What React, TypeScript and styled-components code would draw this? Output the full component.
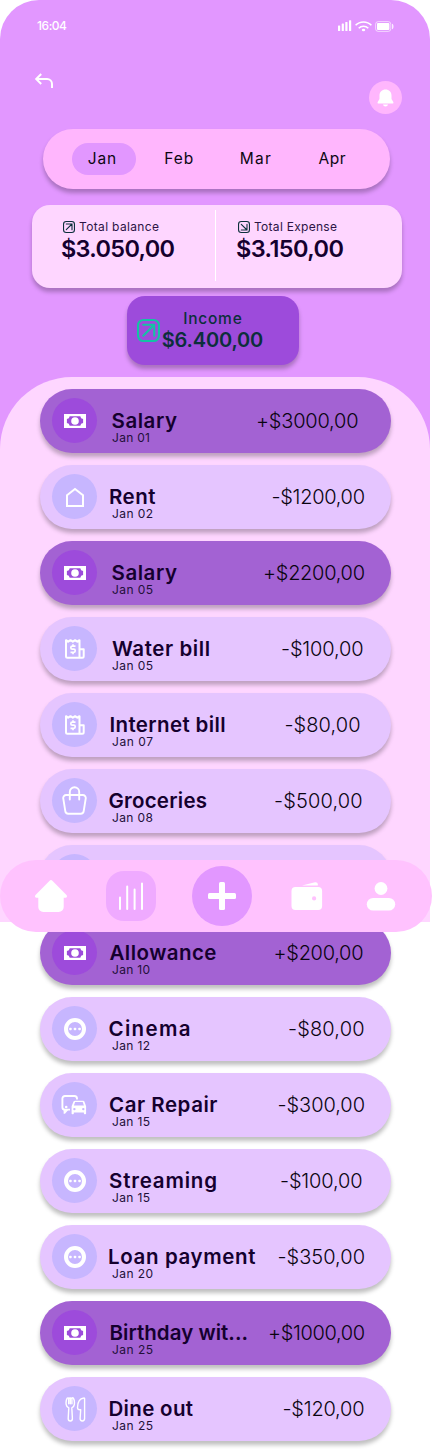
import { useLayoutEffect, useRef, useState } from "react";
import type { ReactNode } from "react";
import styled, { createGlobalStyle } from "styled-components";

const GlobalStyle = createGlobalStyle`
  *, *::before, *::after { box-sizing: border-box; }
  body {
    margin: 0;
    background: #fff;
    font-family: Inter, "Liberation Sans", sans-serif;
    overflow-x: hidden;
  }
  svg { display: block; flex: none; }
`;

const ink = "#15002e";
const softShadow = "0 4px 4px rgba(0, 0, 0, 0.25)";

const Page = styled.div`
  position: relative;
  width: 432px;
  height: 1449px;
  overflow: hidden;
`;

const Screen = styled.main`
  width: 430px;
  height: 922px;
  background: #e297ff;
  border-radius: 39px 39px 0 0;
`;

const StatusBar = styled.div`
  display: flex;
  justify-content: space-between;
  height: 69px;
  padding: 19px 36px 0 37px;
  color: #fff;
`;

const Clock = styled.span`
  font-size: 12px;
  line-height: 14px;
  font-weight: 500;
`;

const StatusIcons = styled.div`
  display: flex;
  align-items: flex-start;
`;

const TopActions = styled.header`
  display: flex;
  justify-content: space-between;
  height: 60px;
  padding: 4px 28px 0 34px;
`;

const BellButton = styled.button`
  display: grid;
  place-items: center;
  width: 33px;
  height: 33px;
  margin-top: 8px;
  padding: 0;
  border: 0;
  border-radius: 50%;
  background: #ffb6fd;
`;

const Months = styled.nav`
  display: flex;
  align-items: center;
  gap: 12.7px;
  width: 347px;
  height: 60px;
  margin-left: 43px;
  padding-left: 29px;
  border-radius: 30px;
  background: #ffb6fd;
  box-shadow: ${softShadow};
`;

const Month = styled.button<{ $active?: boolean }>`
  display: flex;
  justify-content: center;
  width: 64px;
  height: 32px;
  padding: 6px 4px 0 0;
  border: 0;
  border-radius: 16px;
  background: ${(p) => (p.$active ? "#e297ff" : "transparent")};
  color: #0c0712;
  font: 400 15.5px/20px Inter, sans-serif;
`;

const Totals = styled.section`
  display: flex;
  width: 370px;
  height: 83px;
  margin: 16px 0 0 32px;
  padding-top: 5px;
  border-radius: 18px;
  background: #fed6ff;
  box-shadow: ${softShadow};
`;

const Total = styled.div<{ $inset: number; $width: number }>`
  width: ${(p) => p.$width}px;
  padding: 10px 0 0 ${(p) => p.$inset}px;
  color: ${ink};
`;

const TotalLabel = styled.div`
  display: flex;
  align-items: center;
  gap: 4px;
  margin-left: 2px;
  height: 14px;
  font-size: 12px;
  line-height: 14px;
  color: #2c1445;
`;

const TotalValue = styled.div`
  font-size: 23.5px;
  line-height: 30px;
  font-weight: 600;
`;

const Divider = styled.div`
  width: 1px;
  height: 71px;
  background: #fff;
`;

const Income = styled.section`
  display: flex;
  width: 172px;
  height: 69px;
  margin: 8px 0 0 127px;
  padding: 14px 0 0 10px;
  border-radius: 18px;
  background: #9d4bdb;
  box-shadow: ${softShadow};
  color: #0c2f3b;

  > svg { margin-top: 9px; }
`;

const IncomeText = styled.div`
  display: flex;
  flex-direction: column;
  align-items: center;
  width: 104px;
  margin-left: 0.5px;
`;

const IncomeLabel = styled.div`
  font-size: 15.5px;
  line-height: 18px;
  font-weight: 500;
`;

const IncomeValue = styled.div`
  font-size: 20px;
  line-height: 24px;
  font-weight: 600;
`;

const Sheet = styled.section`
  height: 545px;
  margin-top: 12px;
  padding: 12px 0 0 40px;
  border-radius: 72px 72px 0 0;
  background: #fed6ff;
`;

const List = styled.ul`
  display: flex;
  flex-direction: column;
  gap: 12px;
  margin: 0;
  padding: 0;
  list-style: none;
`;

const Row = styled.li<{ $income?: boolean }>`
  display: flex;
  align-items: flex-start;
  width: 351px;
  height: 64px;
  padding-left: 12px;
  border-radius: 32px;
  background: ${(p) => (p.$income ? "#a362d3" : "#e5c5ff")};
  box-shadow: ${softShadow};
`;

const Badge = styled.div<{ $income?: boolean }>`
  display: grid;
  place-items: center;
  flex: none;
  width: 45px;
  height: 45px;
  margin-top: 9px;
  padding: 1px 0 0 1px;
  border-radius: 50%;
  background: ${(p) => (p.$income ? "#9d4bdb" : "#c7b6ff")};
`;

const Details = styled.div`
  padding: 21px 0 0 11px;
`;

const Title = styled.div<{ $indent: number }>`
  height: 22px;
  padding-left: ${(p) => p.$indent}px;
  font-size: 20.5px;
  line-height: 22px;
  font-weight: 600;
  color: ${ink};
`;

const When = styled.div`
  height: 12px;
  margin-left: 4px;
  font-size: 12px;
  line-height: 12px;
  color: #23103a;
`;

const Amount = styled.div<{ $end: number }>`
  margin-left: auto;
  padding: 20px ${(p) => p.$end}px 0 0;
  font-size: 20px;
  line-height: 24px;
  font-weight: 300;
  color: #0a0410;
`;

const TabBar = styled.nav`
  position: absolute;
  top: 860px;
  left: 0;
  display: flex;
  align-items: center;
  width: 432px;
  height: 72px;
  padding-left: 34px;
  border-radius: 36px;
  background: #ffc2fe;
`;

const Tab = styled.button<{ $size: number; $gap: number; $fill?: string; $round?: number }>`
  display: grid;
  place-items: center;
  flex: none;
  width: ${(p) => p.$size}px;
  height: ${(p) => p.$size}px;
  margin-left: ${(p) => p.$gap}px;
  padding: 0;
  border: 0;
  border-radius: ${(p) => p.$round ?? 0}px;
  background: ${(p) => p.$fill ?? "transparent"};
`;

const Tracked = styled.span`
  display: block;
  width: max-content;
  white-space: nowrap;
`;

/* Spreads or tightens the tracking so that a label takes up a set width. */
function Fit({ width, children }: { width: number; children: string }) {
  const ref = useRef<HTMLSpanElement>(null);
  const [tracking, setTracking] = useState(0);
  useLayoutEffect(() => {
    const el = ref.current;
    if (!el) return;
    el.style.letterSpacing = "0px";
    const natural = el.getBoundingClientRect().width;
    const value = (width - natural) / (children.length - 1);
    el.style.letterSpacing = `${value}px`;
    setTracking(value);
  }, [width, children]);
  return (
    <Tracked ref={ref} style={{ letterSpacing: tracking, marginRight: -tracking }}>
      {children}
    </Tracked>
  );
}

const CashIcon = () => (
  <svg width="22" height="14" viewBox="0 0 22 14">
    <path fill="#fff" fillRule="evenodd" d="M0 0h22v14H0zM5.700 2.200A3.200 3.200 0 0 1 2.900 5v4a3.200 3.200 0 0 1 2.800 2.800h10.600A3.200 3.200 0 0 1 19.100 9V5a3.200 3.200 0 0 1-2.800-2.800z" />
    <circle cx="11" cy="7" r="3.800" fill="#fff" />
  </svg>
);

const HouseIcon = () => (
  <svg width="20" height="20" viewBox="0 0 20 20" fill="none" stroke="#fff" strokeWidth="2">
    <path d="M2 8.200 10 2l8 6.200V19H2z" />
  </svg>
);

const ReceiptIcon = () => (
  <svg width="22" height="22" viewBox="0 0 22 22" fill="none" stroke="#fff" strokeWidth="2" strokeLinejoin="round">
    <path d="M15.500 19.800H3.500A1.500 1.500 0 0 1 2 18.300V2.200l2.200 1.500 2.300-1.500 2.300 1.500 2.300-1.500 2.200 1.500 2.200-1.500v17.600h2.700a1.500 1.500 0 0 0 1.500-1.500v-7.100h-4" />
    <path strokeWidth="1.700" d="M11.500 8.200H8.300a1.500 1.500 0 0 0 0 3h1.400a1.500 1.500 0 0 1 0 3.100H6.500M9 6.300v1.900m0 6.100v2" />
  </svg>
);

const BagIcon = () => (
  <svg width="26" height="30" viewBox="0 0 26 30" fill="none" stroke="#fff" strokeWidth="1.900" strokeLinecap="round">
    <path d="M4.300 9h16.400a3 3 0 0 1 3 3.600l-2 12.500a3 3 0 0 1-3 2.600H6.300a3 3 0 0 1-3-2.600l-2-12.500a3 3 0 0 1 3-3.600z" />
    <path d="M7.800 13.500V6a4.700 4.700 0 0 1 9.400 0v7.500" />
  </svg>
);

const DotsIcon = () => (
  <svg width="22" height="22" viewBox="0 0 22 22">
    <circle cx="11" cy="11" r="9" fill="none" stroke="#fff" strokeWidth="4" />
    <g fill="#fff">
      <rect x="5.200" y="9.800" width="2.500" height="2.500" rx=".8" />
      <rect x="9.750" y="9.800" width="2.500" height="2.500" rx=".8" />
      <rect x="14.300" y="9.800" width="2.500" height="2.500" rx=".8" />
    </g>
  </svg>
);

const CommuteIcon = () => (
  <svg width="26" height="20" viewBox="0.6 0 26 20" overflow="visible">
    <path fill="none" stroke="#fff" strokeWidth="1.900" d="M8.600 14.600H3.400A2.400 2.400 0 0 1 1 12.200V3.600A2.600 2.600 0 0 1 3.600 1H13a2.600 2.600 0 0 1 2.600 2.600v.8" />
    <circle cx="4.800" cy="12" r="1.300" fill="#fff" />
    <path fill="#fff" d="M2.200 15h4.600l-3.200 3.800H2.200z" />
    <path fill="#fff" fillRule="evenodd" d="M13.600 5.800h8.200c.6 0 1 .3 1.200.8l1.700 4.600V18.500c0 .4-.3.700-.7.700h-.8c-.4 0-.7-.3-.7-.7v-1H12.400v1c0 .4-.3.700-.7.700h-.8c-.4 0-.7-.3-.7-.7v-7.300l1.900-4.600c.3-.5.800-.8 1.500-.8zM13.700 7.100l-1.200 3.300h10l-1.200-3.300zM13 12.900a1.200 1.200 0 1 0 0 2.400 1.200 1.200 0 0 0 0-2.400zm8.900 0a1.200 1.200 0 1 0 0 2.400 1.200 1.200 0 0 0 0-2.400z" />
  </svg>
);

const CutleryIcon = () => (
  <svg width="21" height="25" viewBox="0 0 21 25" fill="none" stroke="#fff" strokeWidth="1.400" strokeLinejoin="round" strokeLinecap="round">
    <path d="M2.200 1.200C1.100 3 .9 5.700 1.200 7.600c.2 1.700 1.400 2.700 2.600 3.200L3.200 21.500c0 1.500.9 2.500 2.100 2.500s2.100-1 2.100-2.500L6.800 10.800c1.200-.5 2.300-1.500 2.500-3.200.3-1.900.1-4.600-.9-6.400-.6-.7-1.500-.4-1.500.5v5M2.200 1.200c.6-.6 1.500-.3 1.500.5v5M3.700 1.700c.3-1 2.800-1 3.200 0M5.300 1.500v5.200" />
    <path d="M18.800 1c-3.800.5-6.200 4.300-6.300 9.500 0 1.500.8 2.300 2.300 2.300h.9l-.6 8.800c0 1.400.9 2.400 2.200 2.400s2.300-1 2.300-2.400V1.600c0-.4-.4-.7-.8-.6z" />
  </svg>
);

const ArrowBox = ({ size, color, down }: { size: number; color: string; down?: boolean }) => (
  <svg width={size} height={size} viewBox="0 0 22 22" fill="none" stroke={color} strokeWidth="2" strokeLinecap="round" strokeLinejoin="round">
    <rect x="1" y="1" width="20" height="20" rx="5" />
    {down ? <path d="m6 6 10.500 10.500M16.500 6v10.500H6" /> : <path d="M6 16 16.500 5.500M6 5.500h10.500V16" />}
  </svg>
);

type Kind = "cash" | "house" | "receipt" | "bag" | "dots" | "car" | "food";

const icons: Record<Kind, ReactNode> = {
  cash: <CashIcon />,
  house: <HouseIcon />,
  receipt: <ReceiptIcon />,
  bag: <BagIcon />,
  dots: <DotsIcon />,
  car: <CommuteIcon />,
  food: <CutleryIcon />,
};

interface Entry {
  kind: Kind;
  title: string;
  titleWidth: number;
  indent: number;
  date: string;
  dateWidth: number;
  amount: string;
  amountWidth: number;
  end: number;
}

const entry = (
  kind: Kind, title: string, titleWidth: number, indent: number,
  date: string, dateWidth: number, amount: string, amountWidth: number, end: number,
): Entry => ({ kind, title, titleWidth, indent, date, dateWidth, amount, amountWidth, end });

const entries: Entry[] = [
  entry("cash", "Salary", 65.500, 3.5, "Jan 01", 38, "+$3000,00", 102.500, 32.500),
  entry("house", "Rent", 46.500, 1, "Jan 02", 41, "-$1200,00", 93.500, 26),
  entry("cash", "Salary", 65.500, 3.5, "Jan 05", 41, "+$2200,00", 102, 26),
  entry("receipt", "Water bill", 98, 4, "Jan 05", 41, "-$100,00", 82.500, 27.500),
  entry("receipt", "Internet bill", 116, 1.5, "Jan 07", 41, "-$80,00", 76, 30.500),
  entry("bag", "Groceries", 98.500, 0.5, "Jan 08", 41, "-$500,00", 88.500, 28.500),
  entry("dots", "Gift", 34, 1, "Jan 09", 41, "-$50,00", 76, 27),
  entry("cash", "Allowance", 107, 1.5, "Jan 10", 38, "+$200,00", 90, 27.500),
  entry("dots", "Cinema", 82, 0.5, "Jan 12", 38, "-$80,00", 76.500, 26.500),
  entry("car", "Car Repair", 108.500, 1, "Jan 15", 38, "-$300,00", 87.500, 26),
  entry("dots", "Streaming", 108, 1, "Jan 15", 38, "-$100,00", 82.500, 28.500),
  entry("dots", "Loan payment", 147.500, 0, "Jan 20", 41, "-$350,00", 87.500, 26),
  entry("cash", "Birthday wit...", 138.500, 1.5, "Jan 25", 41, "+$1000,00", 97, 26),
  entry("food", "Dine out", 84.500, 0.5, "Jan 25", 41, "-$120,00", 82, 26.500),
];

const months: [string, number][] = [["Jan", 28.500], ["Feb", 29], ["Mar", 31], ["Apr", 27]];

export default function App() {
  return (
    <Page>
      <GlobalStyle />
      <Screen>
        <StatusBar>
          <Clock><Fit width={30}>16:04</Fit></Clock>
          <StatusIcons>
            <svg width="56" height="14" viewBox="0 0 56 14" fill="#fff">
              <rect x="0" y="6.500" width="2.200" height="5.500" rx=".6" />
              <rect x="3.700" y="4.500" width="2.200" height="7.500" rx=".6" />
              <rect x="7.300" y="3" width="2.200" height="9" rx=".6" />
              <rect x="11" y="1.200" width="2.200" height="10.800" rx=".6" />
              <g fill="none" stroke="#fff" strokeWidth="1.600">
                <path d="M17.600 6.300a11 11 0 0 1 15.800 0" />
                <path d="M20.700 9.200a6.800 6.800 0 0 1 9.600 0" />
              </g>
              <ellipse cx="25.500" cy="11" rx="1.700" ry="1.200" />
              <rect x="37.600" y="2.600" width="15.200" height="9.800" rx="2.600" fill="none" stroke="#fff" strokeOpacity=".6" />
              <rect x="39" y="4" width="12.400" height="7" rx="1" />
              <path d="M54 4.800c2 .5 2 5 0 5.500z" fillOpacity=".8" />
            </svg>
          </StatusIcons>
        </StatusBar>
        <TopActions>
          <svg width="20" height="16" viewBox="0 0 20 16" fill="none" stroke="#fff" strokeWidth="2">
            <path d="M7.200 1 2.200 6l5 5M2.200 6H13a5 5 0 0 1 5 5v4" />
          </svg>
          <BellButton aria-label="Notifications">
            <svg width="17" height="18" viewBox="0 0 17 18" fill="#fff">
              <path d="M8.500.5c-3.500 0-6 2.500-6 6v3.600L.7 13c-.4.900 0 1.600.9 1.600h13.800c.9 0 1.300-.7.900-1.600l-1.800-2.900V6.500c0-3.500-2.500-6-6-6zM6 15.500h5c-.3 1.200-1.200 1.900-2.500 1.900S6.300 16.700 6 15.500z" />
            </svg>
          </BellButton>
        </TopActions>
        <Months>
          {months.map(([name, width], i) => (
            <Month key={name} $active={i === 0}><Fit width={width}>{name}</Fit></Month>
          ))}
        </Months>
        <Totals>
          <Total $inset={29} $width={183}>
            <TotalLabel><ArrowBox size={12} color="#0c2f3b" /><Fit width={80}>Total balance</Fit></TotalLabel>
            <TotalValue><Fit width={114}>$3.050,00</Fit></TotalValue>
          </Total>
          <Divider />
          <Total $inset={20} $width={180}>
            <TotalLabel><ArrowBox size={12} color="#0c2f3b" down /><Fit width={83}>Total Expense</Fit></TotalLabel>
            <TotalValue><Fit width={108}>$3.150,00</Fit></TotalValue>
          </Total>
        </Totals>
        <Income>
          <ArrowBox size={23} color="#13c3a4" />
          <IncomeText>
            <IncomeLabel><Fit width={58.500}>Income</Fit></IncomeLabel>
            <IncomeValue><Fit width={101.500}>$6.400,00</Fit></IncomeValue>
          </IncomeText>
        </Income>
        <Sheet>
          <List>
            {entries.map((e, i) => {
              const income = e.kind === "cash";
              return (
                <Row key={i} $income={income}>
                  <Badge $income={income}>{icons[e.kind]}</Badge>
                  <Details>
                    <Title $indent={e.indent}><Fit width={e.titleWidth}>{e.title}</Fit></Title>
                    <When><Fit width={e.dateWidth}>{e.date}</Fit></When>
                  </Details>
                  <Amount $end={e.end}><Fit width={e.amountWidth}>{e.amount}</Fit></Amount>
                </Row>
              );
            })}
          </List>
        </Sheet>
      </Screen>
      <TabBar>
        <Tab $size={34} $gap={0} aria-label="Home">
          <svg width="34" height="34" viewBox="0 0 34 34" fill="#fff">
            <path d="M15.600 1.700a2 2 0 0 1 2.800 0L32.500 16c1 1.100.5 2.700-1 2.700h-1.800V28a5 5 0 0 1-5 5H9.300a5 5 0 0 1-5-5v-9.300H2.500c-1.500 0-2-1.600-1-2.700z" />
          </svg>
        </Tab>
        <Tab $size={50} $gap={38} $fill="#efaaff" $round={18} aria-label="Statistics">
          <svg width="26" height="28" viewBox="0 0 26 28" stroke="#fff" strokeWidth="2" strokeLinecap="round">
            <path d="M2 15.500V27M9.200 4.500V27M16.600 7.500V27M24 1.500V27" />
          </svg>
        </Tab>
        <Tab $size={60} $gap={36} $fill="#e297ff" $round={30} aria-label="Add">
          <svg width="28" height="28" viewBox="0 0 28 28" fill="#fff">
            <rect x="11" y="0" width="6" height="28" rx="1.500" />
            <rect x="0" y="11" width="28" height="6" rx="1.500" />
          </svg>
        </Tab>
        <Tab $size={34} $gap={38} aria-label="Wallet">
          <svg width="34" height="34" viewBox="0 0 34 34" fill="#fff">
            <path fillRule="evenodd" d="M5.500 8h22.600a4 4 0 0 1 4 4v15a4 4 0 0 1-4 4H5.500a4 4 0 0 1-4-4V12a4 4 0 0 1 4-4zm18.600 9.300a2.100 2.100 0 1 0 0 4.200 2.100 2.100 0 0 0 0-4.200z" />
            <path d="M12 6.500 25 3.200c1.500-.3 2.800.6 2.800 2v1.300z" />
          </svg>
        </Tab>
        <Tab $size={34} $gap={40} aria-label="Profile">
          <svg width="34" height="34" viewBox="0 0 34 34" fill="#fff">
            <circle cx="17" cy="9.500" r="6.400" />
            <rect x="2.800" y="19" width="28.400" height="12.600" rx="6.300" />
          </svg>
        </Tab>
      </TabBar>
    </Page>
  );
}
